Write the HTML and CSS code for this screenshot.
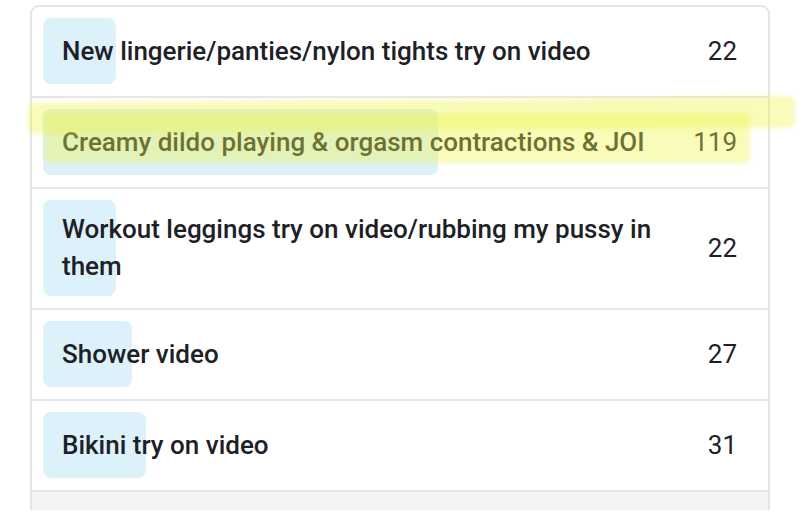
FILE: index.html
```html
<!DOCTYPE html>
<html lang="en">
<head>
<meta charset="utf-8">
<title>Poll</title>
<link rel="stylesheet" href="styles.css">
</head>
<body>
<div class="card">
  <div class="row">
    <div class="cell">
      <div class="bar" style="width:73px"></div>
      <div class="content"><span class="label">New lingerie/panties/nylon tights try on video</span><span class="num">22</span></div>
    </div>
  </div>
  <div class="row">
    <div class="cell">
      <div class="bar" style="width:395px"></div>
      <div class="content"><span class="label">Creamy dildo playing &amp; orgasm contractions &amp; JOI</span><span class="num">119</span></div>
    </div>
  </div>
  <div class="row">
    <div class="cell">
      <div class="bar" style="width:73px"></div>
      <div class="content"><span class="label">Workout leggings try on video/rubbing my pussy in them</span><span class="num">22</span></div>
    </div>
  </div>
  <div class="row">
    <div class="cell">
      <div class="bar" style="width:89px"></div>
      <div class="content"><span class="label">Shower video</span><span class="num">27</span></div>
    </div>
  </div>
  <div class="row">
    <div class="cell">
      <div class="bar" style="width:103px"></div>
      <div class="content"><span class="label">Bikini try on video</span><span class="num">31</span></div>
    </div>
  </div>
  <div class="foot"></div>
</div>
<div class="marker marker-a"></div>
<div class="marker marker-b"></div>
</body>
</html>
```

FILE: styles.css
```css
html, body {
  margin: 0;
  padding: 0;
  background: #ffffff;
  height: 512px;
  overflow: hidden;
}
body {
  font-family: Roboto, "Liberation Sans", sans-serif;
  color: #1d2126;
  position: relative;
}
.card {
  margin: 5px 0 0 30px;
  width: 740px;
  box-sizing: border-box;
  border: 2px solid #e5e5e7;
  border-bottom: none;
  border-radius: 9px 9px 0 0;
  background: #fff;
}
.row {
  padding: 11px 11px 12px 11px;
  border-bottom: 2px solid #e7e7e9;
}
.cell {
  display: grid;
  min-height: 66px;
}
.bar {
  grid-area: 1 / 1;
  justify-self: start;
  background: #dcf1fa;
  border-radius: 8px;
}
.content {
  grid-area: 1 / 1;
  display: flex;
  align-items: center;
  justify-content: space-between;
  gap: 20px;
  padding: 11px 20px 11px 19px;
  font-size: 26px;
  font-weight: 500;
  line-height: 37px;
}
.label {
  flex: 1;
}
.num {
  width: 50px;
  text-align: right;
  font-weight: 400;
}
.foot {
  height: 18px;
  background: #f4f4f5;
}
.marker {
  position: absolute;
  background: rgba(240, 244, 70, 0.38);
  filter: blur(2px);
  border-radius: 6px;
}
.marker-a {
  left: 28px;
  top: 103px;
  width: 767px;
  height: 31px;
  transform: rotate(-0.5deg);
  transform-origin: left center;
}
.marker-b {
  left: 44px;
  top: 113px;
  width: 706px;
  height: 50px;
}
```
